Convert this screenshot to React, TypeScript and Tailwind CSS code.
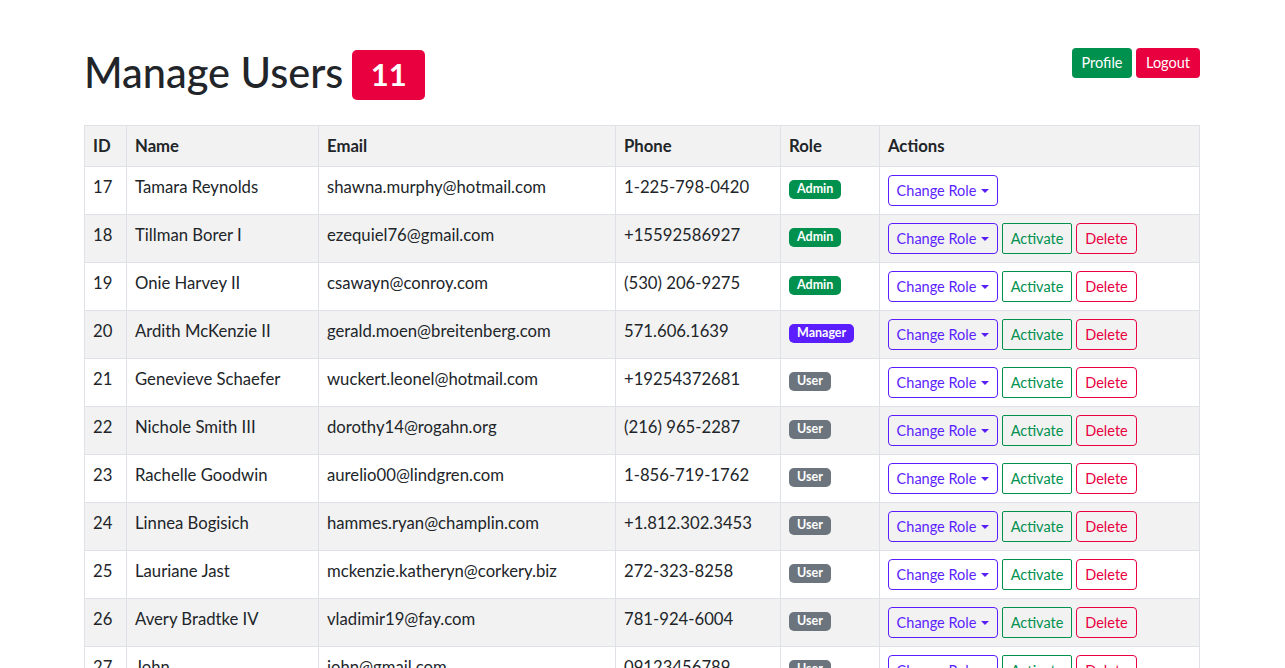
import React from "react"

type User = {
  id: number
  name: string
  email: string
  phone: string
  role: "Admin" | "Manager" | "User"
}

const users: User[] = [
  { id: 17, name: "Tamara Reynolds", email: "shawna.murphy@hotmail.com", phone: "1-225-798-0420", role: "Admin" },
  { id: 18, name: "Tillman Borer I", email: "ezequiel76@gmail.com", phone: "+15592586927", role: "Admin" },
  { id: 19, name: "Onie Harvey II", email: "csawayn@conroy.com", phone: "(530) 206-9275", role: "Admin" },
  { id: 20, name: "Ardith McKenzie II", email: "gerald.moen@breitenberg.com", phone: "571.606.1639", role: "Manager" },
  { id: 21, name: "Genevieve Schaefer", email: "wuckert.leonel@hotmail.com", phone: "+19254372681", role: "User" },
  { id: 22, name: "Nichole Smith III", email: "dorothy14@rogahn.org", phone: "(216) 965-2287", role: "User" },
  { id: 23, name: "Rachelle Goodwin", email: "aurelio00@lindgren.com", phone: "1-856-719-1762", role: "User" },
  { id: 24, name: "Linnea Bogisich", email: "hammes.ryan@champlin.com", phone: "+1.812.302.3453", role: "User" },
  { id: 25, name: "Lauriane Jast", email: "mckenzie.katheryn@corkery.biz", phone: "272-323-8258", role: "User" },
  { id: 26, name: "Avery Bradtke IV", email: "vladimir19@fay.com", phone: "781-924-6004", role: "User" },
  { id: 27, name: "John", email: "john@gmail.com", phone: "09123456789", role: "User" },
]

const roleBadge: Record<User["role"], string> = {
  Admin: "bg-[#00914f]",
  Manager: "bg-[#5b1eff]",
  User: "bg-[#6c757d]",
}

// cell borders shared by th/td
const cell = "border border-[#dee2e6] px-2 py-2 text-left align-top"

function RoleBadge({ role }: { role: User["role"] }) {
  return (
    <span
      className={`mt-[5px] inline-flex h-[19px] items-center rounded-[5px] px-[8px] text-[12.5px] font-bold leading-none text-white ${roleBadge[role]}`}
    >
      {role}
    </span>
  )
}

function Actions({ self }: { self: boolean }) {
  return (
    <div className="flex gap-1 text-[14.5px]">
      <button
        type="button"
        className="flex h-[31px] w-[110px] items-center justify-center rounded-[4px] border border-[#5b1eff] text-[#5b1eff]"
      >
        Change Role
        <span className="ml-[5px] inline-block h-0 w-0 border-x-[4px] border-t-[4px] border-x-transparent border-t-[#5b1eff]" />
      </button>
      {!self && (
        <>
          <button
            type="button"
            className="h-[31px] w-[70px] rounded-[2px] border border-[#00914f] text-[#00914f]"
          >
            Activate
          </button>
          <button
            type="button"
            className="h-[31px] w-[61px] rounded-[4px] border border-[#e8003f] text-[#e8003f]"
          >
            Delete
          </button>
        </>
      )}
    </div>
  )
}

export default function App() {
  return (
    <div
      className="min-h-screen bg-white text-[#212529]"
      style={{ fontFamily: "Lato, 'Noto Sans', sans-serif" }}
    >
      <div className="ml-[84px] w-[1116px] pt-[48px]">
        {/* header */}
        <div className="mb-[24px] flex items-start justify-between">
          <h1 className="flex h-[53px] items-center gap-[9px] text-[41.5px] font-medium leading-[1.2]">
            <span className="-mt-[3px]">Manage Users</span>
            <span className="flex h-[50px] w-[73px] items-center justify-center rounded-[5px] bg-[#e8003f] text-[31px] font-bold leading-none text-white">
              11
            </span>
          </h1>
          <div className="flex gap-1 text-[14.5px]">
            <button type="button" className="h-[30px] w-[60px] rounded-[4px] bg-[#00914f] text-white">
              Profile
            </button>
            <button type="button" className="h-[30px] w-[64px] rounded-[4px] bg-[#e8003f] text-white">
              Logout
            </button>
          </div>
        </div>

        {/* table */}
        <table className="w-full border-collapse text-[16.7px] leading-[24px]">
          <thead>
            <tr className="bg-[#f2f2f2]">
              <th className={`${cell} w-[42px] font-bold`}>ID</th>
              <th className={`${cell} w-[192px] font-bold`}>Name</th>
              <th className={`${cell} w-[297px] font-bold`}>Email</th>
              <th className={`${cell} w-[165px] font-bold`}>Phone</th>
              <th className={`${cell} w-[99px] font-bold`}>Role</th>
              <th className={`${cell} font-bold`}>Actions</th>
            </tr>
          </thead>
          <tbody>
            {users.map((u, i) => (
              <tr key={u.id} className={i % 2 === 1 ? "bg-[#f2f2f2]" : "bg-white"}>
                <td className={`${cell} h-[48px]`}>{u.id}</td>
                <td className={cell}>{u.name}</td>
                <td className={cell}>{u.email}</td>
                <td className={cell}>{u.phone}</td>
                <td className={cell}>
                  <RoleBadge role={u.role} />
                </td>
                <td className={cell}>
                  <Actions self={u.id === 17} />
                </td>
              </tr>
            ))}
          </tbody>
        </table>
      </div>
    </div>
  )
}
